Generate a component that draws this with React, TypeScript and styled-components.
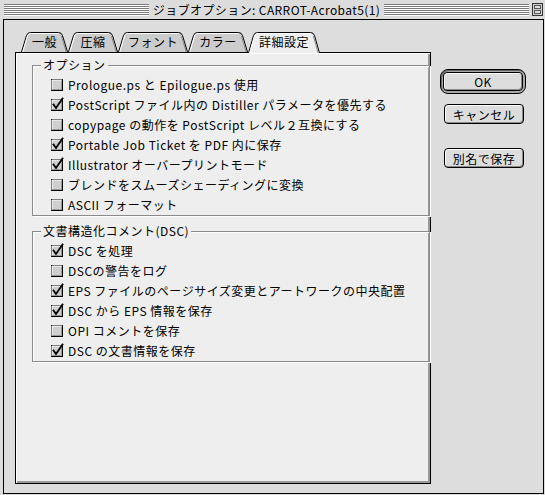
import React from 'react'
import styled, { createGlobalStyle } from 'styled-components'

const Global = createGlobalStyle`
  html, body {
    margin: 0;
    padding: 0;
    background: #dddddd;
  }
  body {
    font-family: "Noto Sans CJK JP", "Liberation Sans", sans-serif;
    font-size: 12px;
    letter-spacing: 0.5px;
    color: #000;
  }
`

const Window = styled.div`
  width: 545px;
  height: 495px;
  box-sizing: border-box;
  padding: 0 1px 1px 3px;
  background: #dcdcdc;
  display: flex;
  flex-direction: column;
`

const TitleBar = styled.div`
  height: 19px;
  display: flex;
  align-items: center;
  padding: 0 1px 0 1px;
`

const Stripes = styled.div`
  flex: 1;
  height: 12px;
  margin-top: 1px;
  background: repeating-linear-gradient(
    to bottom,
    #7a7a7a 0,
    #7a7a7a 1px,
    #ffffff 1px,
    #ffffff 2px
  );
`

const Title = styled.div`
  padding: 0 4px;
  line-height: 19px;
  white-space: nowrap;
  letter-spacing: 0.4px;
`

const CollapseBox = styled.svg`
  margin-left: 3px;
  flex: none;
`

const Content = styled.div`
  flex: 1;
  border: 1px solid #000;
  background: #dddddd;
  display: flex;
  padding: 12px 0 9px 11px;
`

const Main = styled.div`
  width: 416px;
  display: flex;
  flex-direction: column;
`

const TabRow = styled.div`
  display: flex;
  align-items: flex-end;
  height: 20px;
  padding-left: 6px;
`

const TabItem = styled.div<{ $w: number; $active?: boolean }>`
  position: relative;
  width: ${(p) => p.$w}px;
  height: ${(p) => (p.$active ? 21 : 20)}px;
  margin-bottom: ${(p) => (p.$active ? -1 : 0)}px;
  z-index: ${(p) => (p.$active ? 1 : 0)};
  display: flex;
  justify-content: center;
  flex: none;
`

const TabShape = styled.svg`
  position: absolute;
  left: 0;
  top: 0;
`

const TabLabel = styled.span`
  position: relative;
  line-height: 20px;
`

const Panel = styled.div`
  flex: 1;
  background: #eeeeee;
  border: 1px solid #000;
  box-shadow: inset 1px 1px 0 #ffffff, inset -2px -2px 0 #9a9a9a;
  padding-top: 12px;
`

const Group = styled.div<{ $gap?: number }>`
  position: relative;
  width: 378px;
  margin: ${(p) => p.$gap ?? 0}px 0 0 16px;
  border: 1px solid #8a8a8a;
  box-shadow: 1px 1px 0 #ffffff, inset 1px 1px 0 #ffffff;
  padding: 8px 0 1px 18px;
`

const GroupLabel = styled.span`
  position: absolute;
  top: -9px;
  left: 8px;
  padding: 0 2px;
  background: #eeeeee;
  line-height: 16px;
`

const Row = styled.div`
  height: 20px;
  display: flex;
  align-items: center;
  gap: 4px;
  white-space: nowrap;
`

const Side = styled.div`
  display: flex;
  flex-direction: column;
  align-items: flex-start;
  padding: 37px 0 0 9px;
`

const DefaultRing = styled.div`
  border: 1px solid #000;
  border-radius: 8px;
  padding: 2px;
  background: #a8a8a8;
  box-shadow: inset 1px 1px 0 #666;
`

const Button = styled.button<{ $w: number; $h: number; $mt?: number }>`
  width: ${(p) => p.$w}px;
  height: ${(p) => p.$h}px;
  margin: ${(p) => p.$mt ?? 0}px 0 0 ${(p) => (p.$mt ? 4 : 0)}px;
  padding: 0;
  font: inherit;
  color: #000;
  background: #dddddd;
  border: 1px solid #000;
  border-radius: 4px;
  box-shadow: inset 1px 1px 0 #ffffff, inset -1px -1px 0 #8a8a8a;
  letter-spacing: 0.5px;
`

const tabs = [
  { label: '一般', w: 47 },
  { label: '圧縮', w: 50 },
  { label: 'フォント', w: 70 },
  { label: 'カラー', w: 60 },
  { label: '詳細設定', w: 72, active: true },
]

const options = [
  { label: 'Prologue.ps と Epilogue.ps 使用', checked: false },
  { label: 'PostScript ファイル内の Distiller パラメータを優先する', checked: true },
  { label: 'copypage の動作を PostScript レベル２互換にする', checked: false },
  { label: 'Portable Job Ticket を PDF 内に保存', checked: true },
  { label: 'Illustrator オーバープリントモード', checked: true },
  { label: 'ブレンドをスムーズシェーディングに変換', checked: false },
  { label: 'ASCII フォーマット', checked: false },
]

const dsc = [
  { label: 'DSC を処理', checked: true },
  { label: 'DSCの警告をログ', checked: false },
  { label: 'EPS ファイルのページサイズ変更とアートワークの中央配置', checked: true },
  { label: 'DSC から EPS 情報を保存', checked: true },
  { label: 'OPI コメントを保存', checked: false },
  { label: 'DSC の文書情報を保存', checked: true },
]

function Tab({ label, w, active }: { label: string; w: number; active?: boolean }) {
  const h = active ? 21 : 20
  const d = `M0.5 ${h} L5.5 3.5 Q6.5 0.5 9.5 0.5 L${w - 9.5} 0.5 Q${w - 6.5} 0.5 ${w - 5.5} 3.5 L${w - 0.5} ${h}`
  return (
    <TabItem $w={w} $active={active}>
      <TabShape width={w} height={h}>
        <path d={d} fill={active ? '#eeeeee' : '#cccccc'} stroke="#000" />
        <path
          d={`M1.8 ${h} L6.6 4 Q7.4 1.5 9.5 1.5 L${w - 9.5} 1.5`}
          fill="none"
          stroke="#fff"
        />
        <path
          d={`M${w - 6.6} 4 L${w - 1.8} ${h}`}
          fill="none"
          stroke="#8a8a8a"
        />
      </TabShape>
      <TabLabel>{label}</TabLabel>
    </TabItem>
  )
}

function CheckBox({ checked }: { checked: boolean }) {
  return (
    <svg width="14" height="14" viewBox="0 0 14 14" style={{ flex: 'none', marginLeft: -1 }}>
      <rect x="1.5" y="2.5" width="11" height="11" fill="#cfcfcf" stroke="#000" />
      <path d="M2 13 V3 H12" fill="none" stroke="#fff" />
      <path d="M2.5 12.5 H12 V3.5" fill="none" stroke="#999" transform="translate(-0.5 0)" />
      {checked && (
        <path
          d="M3.5 7.5 L6 11 L12.5 1.5"
          fill="none"
          stroke="#000"
          strokeWidth="1.8"
          strokeLinecap="square"
        />
      )}
    </svg>
  )
}

function App() {
  return (
    <>
      <Global />
      <Window>
        <TitleBar>
          <Stripes />
          <Title>ジョブオプション: CARROT-Acrobat5(1)</Title>
          <Stripes />
          <CollapseBox width="11" height="13" viewBox="0 0 11 13">
            <rect x="0.5" y="0.5" width="10" height="12" fill="#cfcfcf" stroke="#333" />
            <rect x="2.5" y="2.5" width="6" height="3" fill="#ddd" stroke="#555" />
            <rect x="2.5" y="7.5" width="6" height="3" fill="#ddd" stroke="#555" />
          </CollapseBox>
        </TitleBar>
        <Content>
          <Main>
            <TabRow>
              {tabs.map((t) => (
                <Tab key={t.label} label={t.label} w={t.w} active={t.active} />
              ))}
            </TabRow>
            <Panel>
              <Group>
                <GroupLabel>オプション</GroupLabel>
                {options.map((o) => (
                  <Row key={o.label}>
                    <CheckBox checked={o.checked} />
                    <span>{o.label}</span>
                  </Row>
                ))}
              </Group>
              <Group $gap={15}>
                <GroupLabel>文書構造化コメント(DSC)</GroupLabel>
                {dsc.map((o) => (
                  <Row key={o.label}>
                    <CheckBox checked={o.checked} />
                    <span>{o.label}</span>
                  </Row>
                ))}
              </Group>
            </Panel>
          </Main>
          <Side>
            <DefaultRing>
              <Button $w={80} $h={19}>OK</Button>
            </DefaultRing>
            <Button $w={80} $h={20} $mt={10}>キャンセル</Button>
            <Button $w={80} $h={20} $mt={24}>別名で保存</Button>
          </Side>
        </Content>
      </Window>
    </>
  )
}

export default App
